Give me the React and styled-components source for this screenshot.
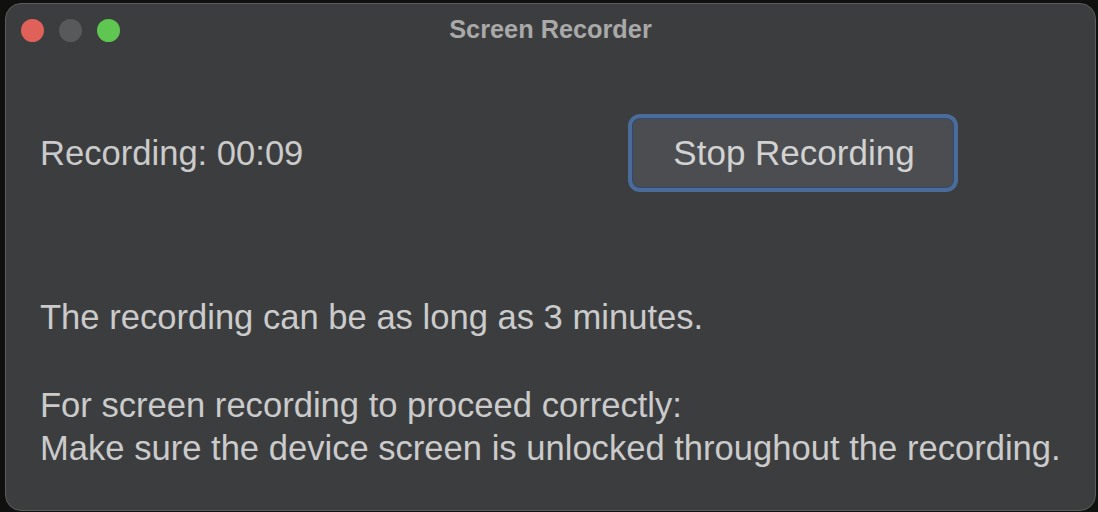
import styled, { createGlobalStyle } from 'styled-components';

const GlobalStyle = createGlobalStyle`
  html, body {
    margin: 0;
    padding: 0;
    background: #10110e;
    overflow: hidden;
  }
  * { box-sizing: border-box; }
`;

const Screen = styled.div`
  width: 1098px;
  height: 512px;
  padding: 3px 2px 0 5px;
  display: flex;
`;

const Window = styled.div`
  flex: 1;
  height: 508px;
  background: #3c3d3f;
  border: 1px solid #5a5b5d;
  border-radius: 16px;
  display: flex;
  flex-direction: column;
  font-family: 'Liberation Sans', Arial, sans-serif;
  color: #cbcbcb;
`;

const TitleBar = styled.div`
  height: 52px;
  display: grid;
  grid-template-columns: 1fr auto 1fr;
  align-items: center;
  padding: 0 15px;
`;

const Lights = styled.div`
  display: flex;
  gap: 15px;
`;

const Light = styled.span`
  width: 23px;
  height: 23px;
  border-radius: 50%;
  background: ${(p) => p.color};
`;

const Title = styled.div`
  font-size: 25.3px;
  font-weight: bold;
  color: #a9a9a9;
  padding-bottom: 2px;
`;

const Content = styled.div`
  padding: 58px 0 0 34px;
  font-size: 34.6px;
  line-height: 43px;
`;

const TopRow = styled.div`
  display: grid;
  grid-template-columns: 588px auto;
  align-items: center;
  height: 78px;
`;

const StopButton = styled.button`
  width: 330px;
  height: 78px;
  border-radius: 12px;
  border: 4px solid #4b6c9b;
  background: #4b4d50;
  box-shadow: inset 0 0 0 1px #2f4a70;
  color: #d2d2d2;
  font-family: inherit;
  font-size: 35px;
  padding: 0 0 0 2px;
`;

const Paragraph = styled.p`
  margin: ${(p) => p.top}px 0 0;
`;

export default function App() {
  return (
    <Screen>
      <GlobalStyle />
      <Window>
        <TitleBar>
          <Lights>
            <Light color="#e0605a" />
            <Light color="#58595b" />
            <Light color="#5fc652" />
          </Lights>
          <Title>Screen Recorder</Title>
          <div />
        </TitleBar>
        <Content>
          <TopRow>
            <span>Recording: 00:09</span>
            <StopButton>Stop Recording</StopButton>
          </TopRow>
          <Paragraph top={104}>The recording can be as long as 3 minutes.</Paragraph>
          <Paragraph top={45}>
            For screen recording to proceed correctly:
            <br />
            Make sure the device screen is unlocked throughout the recording.
          </Paragraph>
        </Content>
      </Window>
    </Screen>
  );
}
